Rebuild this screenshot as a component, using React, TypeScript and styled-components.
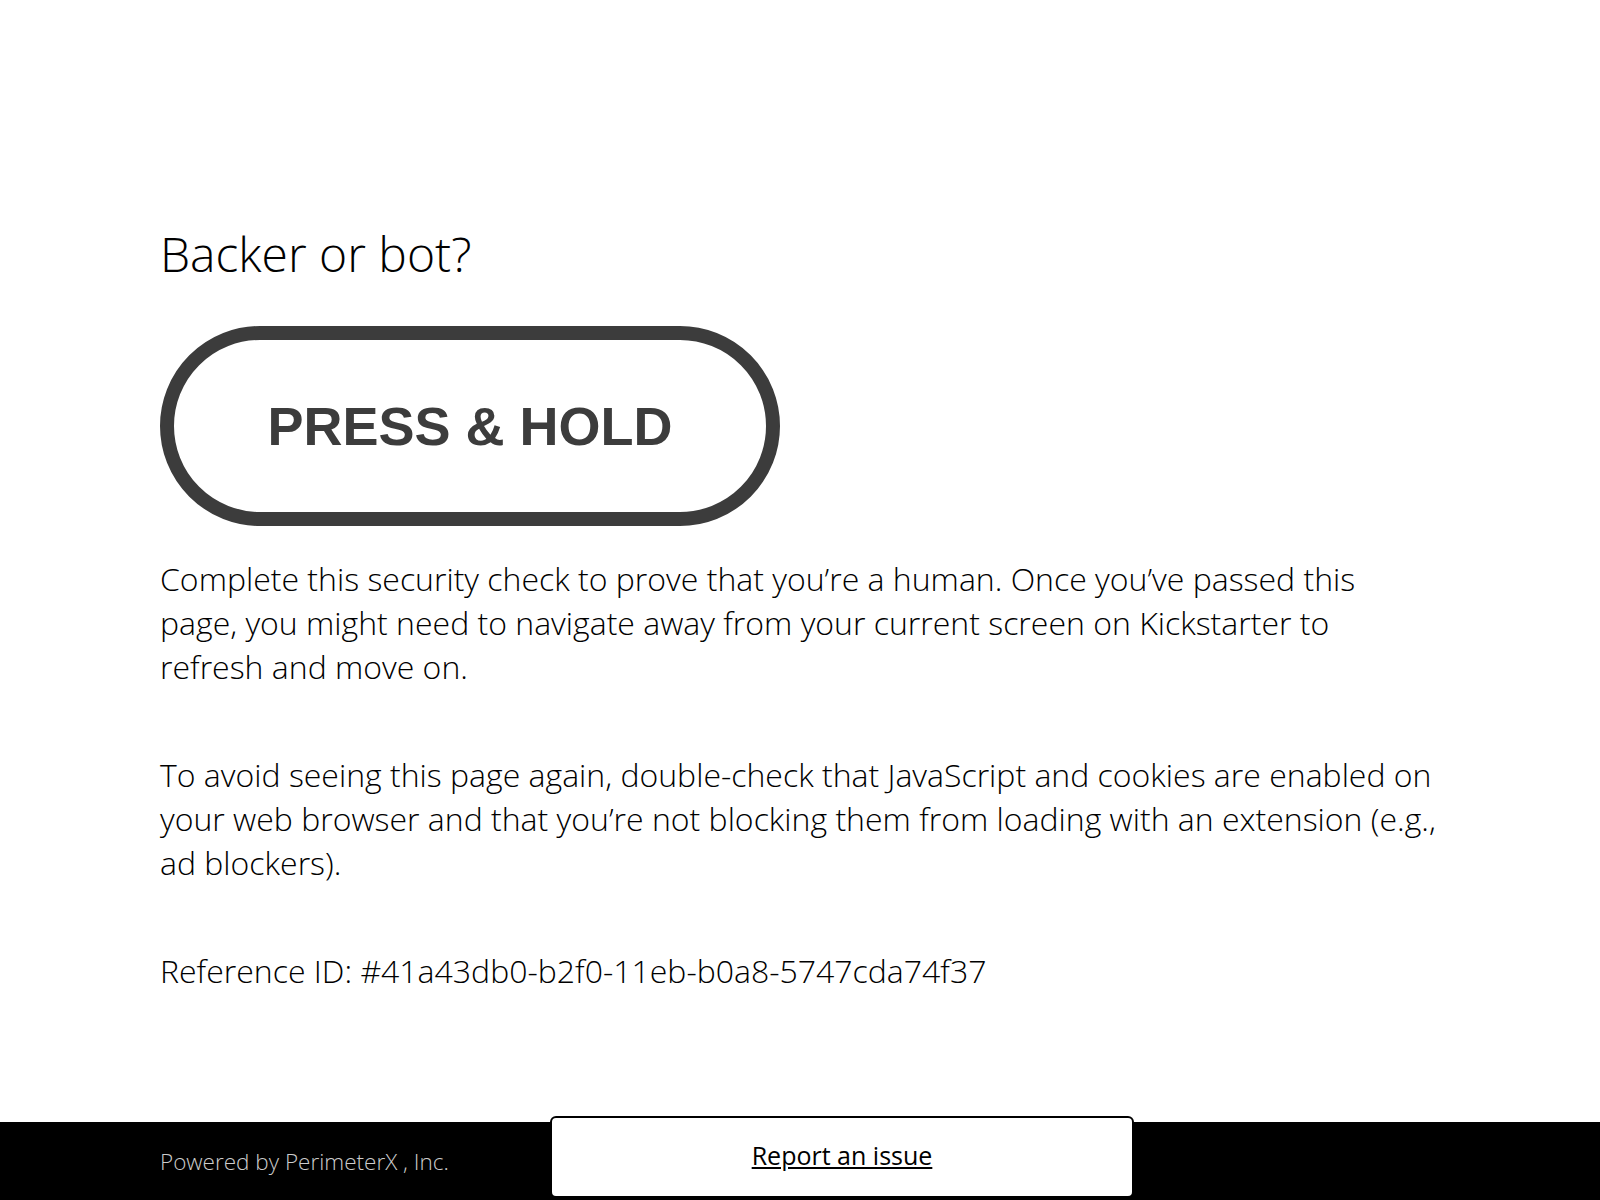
import React from 'react'
import styled, { createGlobalStyle } from 'styled-components'

const GlobalStyle = createGlobalStyle`
  html, body {
    margin: 0;
    padding: 0;
    background: #fff;
  }
  body {
    font-family: 'Open Sans', 'Noto Sans', sans-serif;
    color: #000;
  }
`

export default function App() {
  return (
    <>
      <GlobalStyle />
      <Page>
        <Main>
          <Title>Backer or bot?</Title>
          <HoldButton type="button">PRESS &amp; HOLD</HoldButton>
          <Text>
            Complete this security check to prove that you’re a human. Once you’ve passed this
            page, you might need to navigate away from your current screen on Kickstarter to
            refresh and move on.
          </Text>
          <Text>
            To avoid seeing this page again, double-check that JavaScript and cookies are enabled
            on your web browser and that you’re not blocking them from loading with an extension
            (e.g., ad blockers).
          </Text>
          <Text>Reference ID: #41a43db0-b2f0-11eb-b0a8-5747cda74f37</Text>
        </Main>

        <Footer>
          <Powered>
            Powered by <PoweredLink>PerimeterX</PoweredLink> , Inc.
          </Powered>
          <ReportBox>
            <ReportLink href="#">Report an issue</ReportLink>
          </ReportBox>
        </Footer>
      </Page>
    </>
  )
}

const Page = styled.div`
  min-height: 100vh;
  display: flex;
  flex-direction: column;
`

const Main = styled.main`
  flex: 1;
  padding: 221px 160px 0;
  max-width: 1280px;
`

const Title = styled.h1`
  margin: 0;
  font-size: 48px;
  font-weight: 300;
  line-height: 65px;
  color: #000;
`

const HoldButton = styled.button`
  box-sizing: border-box;
  display: flex;
  align-items: center;
  justify-content: center;
  width: 620px;
  height: 200px;
  margin-top: 40px;
  padding: 0;
  border: 14px solid #3c3c3c;
  border-radius: 100px;
  background: #fff;
  color: #3c3c3c;
  font-family: 'Liberation Sans', Arial, sans-serif;
  font-size: 54px;
  font-weight: 700;
  cursor: pointer;
`

const Text = styled.p`
  margin: 0;
  font-size: 32px;
  font-weight: 300;
  line-height: 44px;
  color: #000;

  & + & {
    margin-top: 64px;
  }

  ${HoldButton} + & {
    margin-top: 31px;
  }
`

const Footer = styled.footer`
  display: flex;
  align-items: center;
  height: 78px;
  margin-top: auto;
  padding-left: 160px;
  background: #000;
`

const Powered = styled.p`
  flex: 0 0 390px;
  margin: 0;
  font-size: 22.5px;
  font-weight: 300;
  color: #cccccc;
`

const PoweredLink = styled.span`
  color: inherit;
`

const ReportBox = styled.div`
  box-sizing: border-box;
  align-self: flex-start;
  display: flex;
  align-items: center;
  justify-content: center;
  width: 584px;
  height: 82px;
  margin-top: -6px;
  padding-bottom: 4px;
  border: 2px solid #000;
  border-radius: 6px;
  background: #fff;
`

const ReportLink = styled.a`
  font-size: 25px;
  font-weight: 400;
  color: #000;
  text-decoration: underline;
`
